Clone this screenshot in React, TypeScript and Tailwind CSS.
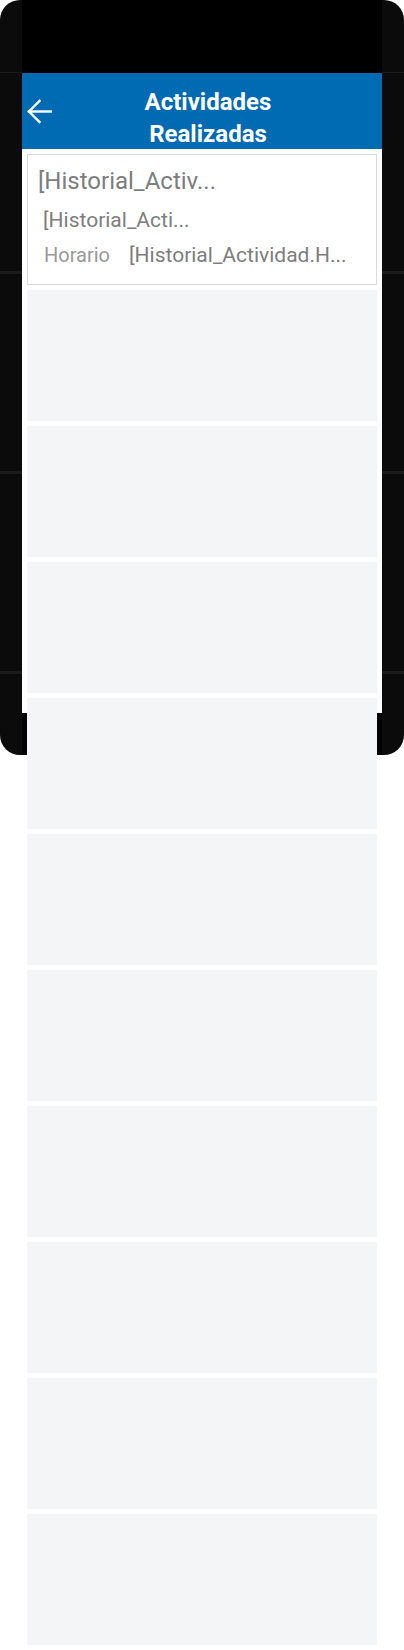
const filas = Array.from({ length: 10 }, (_, i) => i);

function ArrowBack() {
  return (
    <svg width="25" height="25" viewBox="0 0 25 25" fill="none" className="block">
      <path d="M2 12.5H24" stroke="white" strokeWidth="2.4" strokeLinecap="square" />
      <path d="M12.5 2L2 12.5L12.5 23" stroke="white" strokeWidth="2.4" strokeLinecap="square" />
    </svg>
  );
}

export default function App() {
  return (
    <div className="min-h-[1650px] w-[404px] bg-white font-['Roboto',sans-serif]">
      <div className="relative h-[755px] rounded-[20px] bg-[#0b0b0b] px-[22px]">
        {/* marcas del marco del teléfono */}
        <div className="absolute left-0 right-0 top-[72px] h-px bg-[#1c1c1c]" />
        <div className="absolute left-0 right-0 top-[271px] h-[3px] bg-[#1c1c1c]" />
        <div className="absolute left-0 right-0 top-[471px] h-[3px] bg-[#1c1c1c]" />
        <div className="absolute left-0 right-0 top-[671px] h-[3px] bg-[#1c1c1c]" />

        <div className="relative h-full bg-black">
          <div className="h-[73px]" />
          <div className="h-[640px] bg-white">
            <header className="flex h-[76px] bg-[#006ab3]">
              <div className="flex w-[30px] items-center justify-end">
                <ArrowBack />
              </div>
              <h1 className="flex-1 pr-[18px] pt-[13px] text-center text-[24px] font-bold leading-[32px] text-white">
                Actividades
                <br />
                Realizadas
              </h1>
            </header>

            <div className="flex flex-col gap-[5px] px-[5px] pt-[5px]">
              <div className="h-[131px] shrink-0 border border-[#d9d9d9] bg-white px-[10px] pt-[12px]">
                <p className="whitespace-nowrap text-[24px] leading-[28px] text-[#7d7d7d]">[Historial_Activ...</p>
                <p className="mt-[13px] whitespace-nowrap pl-[5px] text-[21px] leading-[24px] text-[#7d7d7d]">
                  [Historial_Acti...
                </p>
                <div className="mt-[11px] flex items-baseline whitespace-nowrap pl-[6px] leading-[24px]">
                  <span className="w-[85px] text-[20px] text-[#999999]">Horario</span>
                  <span className="text-[21px] text-[#7d7d7d]">[Historial_Actividad.H...</span>
                </div>
              </div>
              {filas.map((i) => (
                <div key={i} className="h-[131px] shrink-0 bg-[#f4f5f7]" />
              ))}
            </div>
          </div>
        </div>
      </div>
    </div>
  );
}
